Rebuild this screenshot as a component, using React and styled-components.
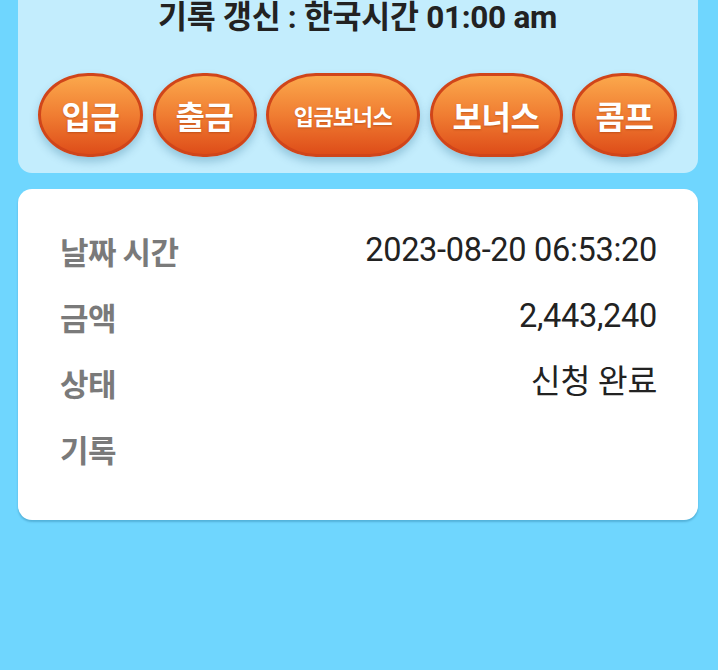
import styled, { createGlobalStyle } from 'styled-components';

const GlobalStyle = createGlobalStyle`
  html, body {
    margin: 0;
    padding: 0;
    background: #6fd6fe;
  }
  body {
    font-family: Roboto, "Noto Sans CJK KR", sans-serif;
  }
`;

const Page = styled.div`
  min-height: 670px;
  padding: 0 20px 0 18px;
  display: flex;
  flex-direction: column;
  gap: 16px;
`;

const TopPanel = styled.section`
  background: #c3edfd;
  border-radius: 0 0 14px 14px;
  padding: 0 21px 16px 20px;
  display: flex;
  flex-direction: column;
  align-items: center;
`;

const Title = styled.h1`
  margin: 0;
  height: 38px;
  line-height: 36px;
  font-size: 31.5px;
  font-weight: 700;
  color: #222;
  letter-spacing: -0.3px;
  white-space: nowrap;
`;

const ButtonRow = styled.div`
  margin-top: 35px;
  width: 100%;
  display: flex;
  justify-content: space-between;
`;

const PillButton = styled.button`
  width: ${p => p.$w}px;
  height: 84px;
  border: 3px solid #d0451a;
  border-radius: 50px / 42px;
  background: linear-gradient(180deg, #fba84c 0%, #f07d32 50%, #de4d19 100%);
  box-shadow: 0 5px 8px rgba(0, 80, 120, 0.25);
  color: #fff;
  font-family: "Noto Sans CJK KR", sans-serif;
  font-size: ${p => p.$size}px;
  font-weight: 700;
  line-height: 1;
  letter-spacing: -0.5px;
  text-shadow: 0 1px 2px rgba(120, 40, 0, 0.35);
  padding: 0;
  cursor: pointer;
`;

const Card = styled.section`
  background: #fff;
  border-radius: 14px;
  box-shadow: 0 2px 2px rgba(0, 70, 110, 0.25);
  padding: 28px 41px 39px 42px;
  display: flex;
  flex-direction: column;
`;

const Row = styled.div`
  height: 66px;
  display: flex;
  align-items: center;
  justify-content: space-between;
`;

const Label = styled.span`
  font-family: "Noto Sans CJK KR", sans-serif;
  font-size: 31px;
  font-weight: 700;
  line-height: 1;
  letter-spacing: -0.5px;
  color: #7a7a7a;
`;

const Value = styled.span`
  font-family: Roboto, "Noto Sans CJK KR", sans-serif;
  font-size: 32.5px;
  line-height: 1;
  color: #222;
  letter-spacing: -0.3px;
`;

const buttons = [
  { text: '입금', w: 105, size: 32 },
  { text: '출금', w: 104, size: 32 },
  { text: '입금보너스', w: 154, size: 22 },
  { text: '보너스', w: 133, size: 32 },
  { text: '콤프', w: 105, size: 32 },
];

const rows = [
  ['날짜 시간', '2023-08-20 06:53:20'],
  ['금액', '2,443,240'],
  ['상태', '신청 완료'],
  ['기록', ''],
];

export default function App() {
  return (
    <>
      <GlobalStyle />
      <Page>
        <TopPanel>
          <Title>기록 갱신 : 한국시간 01:00 am</Title>
          <ButtonRow>
            {buttons.map(b => (
              <PillButton key={b.text} $w={b.w} $size={b.size}>{b.text}</PillButton>
            ))}
          </ButtonRow>
        </TopPanel>
        <Card>
          {rows.map(([k, v]) => (
            <Row key={k}>
              <Label>{k}</Label>
              <Value>{v}</Value>
            </Row>
          ))}
        </Card>
      </Page>
    </>
  );
}
